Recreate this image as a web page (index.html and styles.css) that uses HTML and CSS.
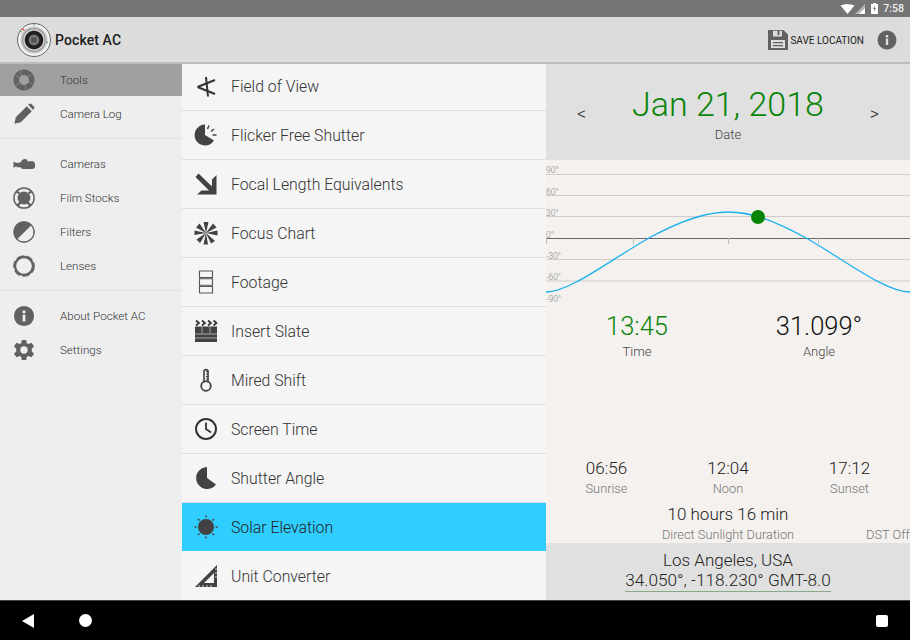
FILE: index.html
```html
<!DOCTYPE html>
<html lang="en">
<head>
<meta charset="utf-8">
<title>Pocket AC</title>
<link rel="stylesheet" href="styles.css">
</head>
<body>
<div class="screen">
  <div class="statusbar">
    <svg class="st-wifi" viewBox="0 0 14 10"><path d="M0 1.500Q7-1.500 14 1.500L7 10Z" fill="#fff"/></svg>
    <svg class="st-cell" viewBox="0 0 10 10"><path d="M10 0V10H0Z" fill="#b5b5b5"/><path d="M10 4V10H4Z" fill="#fff"/></svg>
    <svg class="st-batt" viewBox="0 0 7 11"><path d="M2 0H5V1H7V11H0V1H2Z" fill="#fff"/><path d="M4 2.500L2 6H3.200L3 8.800L5 5H3.800Z" fill="#757575"/></svg>
    <span class="st-time">7:58</span>
  </div>
  <header class="toolbar">
    <svg class="logo" viewBox="0 0 36 36">
      <defs>
        <radialGradient id="lg" cx="50%" cy="50%" r="50%">
          <stop offset="0" stop-color="#777"/><stop offset=".3" stop-color="#8a8a8a"/>
          <stop offset=".42" stop-color="#222"/><stop offset=".62" stop-color="#1c1c1c"/>
          <stop offset=".7" stop-color="#ddd"/><stop offset=".8" stop-color="#999"/><stop offset="1" stop-color="#eee"/>
        </radialGradient>
      </defs>
      <circle cx="18" cy="18" r="16.500" fill="#f2f2f2" stroke="#333" stroke-width=".7"/>
      <circle cx="18" cy="18" r="14" fill="url(#lg)"/>
      <circle cx="18" cy="18" r="3.300" fill="#555"/>
      <path d="M4.500 9L6 10.500" stroke="#2a9a2a" stroke-width="1"/><path d="M6.500 7L8.500 8.500" stroke="#d22" stroke-width="1.200"/><path d="M18 2v1.500" stroke="#2a9a2a"/><path d="M30.500 20l1.500.5" stroke="#2a9a2a"/>
    </svg>
    <span class="app-title">Pocket AC</span>
    <span class="toolbar-gap"></span>
    <svg class="save-icon" viewBox="0 0 20 20"><path fill-rule="evenodd" d="M0 0H15.500L20 4.500V20H0ZM5 0.800V6.500H14V0.800H11.500V5H9.500V0.800ZM3 10V18H17V10Z" fill="#616161"/><path d="M5 12H15V13.200H5ZM5 15H15V16.200H5Z" fill="#616161"/></svg>
    <span class="save-label">SAVE LOCATION</span>
    <svg class="info-icon" viewBox="0 0 20 20"><circle cx="10" cy="10" r="9.500" fill="#616161"/><rect x="8.800" y="8.500" width="2.400" height="6.500" fill="#ddd"/><rect x="8.800" y="5" width="2.400" height="2.400" fill="#ddd"/></svg>
  </header>
  <div class="main">
    <nav class="sidebar">
      <div class="nav-group">
        <div class="nav-item selected">
          <svg class="nav-icon" viewBox="0 0 24 24"><circle cx="12" cy="12" r="8.500" fill="none" stroke="#616161" stroke-width="6"/><path d="M9 1.500L8.500 7.500M21 6L15.500 8.500M22 17L16 13.500M14.500 22.500L13 16.500M3 18L8.500 14.500M2.500 7L8.500 10" stroke="#8c8c8c" stroke-width=".9"/></svg>
          <span>Tools</span>
        </div>
        <div class="nav-item">
          <svg class="nav-icon" viewBox="0 0 24 24"><path d="M1.500 22.500L3 15.500L15 3.500L20.500 9L8.500 21ZM16.500 2L18 .8Q19 .2 20 1L23 4Q23.800 5 23 6L22 7.500Z" fill="#616161"/></svg>
          <span>Camera Log</span>
        </div>
      </div>
      <div class="nav-group">
        <div class="nav-item">
          <svg class="nav-icon" viewBox="0 0 24 24"><path d="M.5 9.500L4 11V10.500H7L9.500 9V7.500L12.500 6.500Q15.500 6 16 9H22Q24 10 24 12.500V15.500Q23.500 17.500 21 17.500H10L8 15.500H4V14.500L.5 16Z" fill="#616161"/></svg>
          <span>Cameras</span>
        </div>
        <div class="nav-item">
          <svg class="nav-icon" viewBox="0 0 24 24"><circle cx="12" cy="12" r="11" fill="none" stroke="#616161" stroke-width="1.600"/><circle cx="12" cy="12" r="7" fill="#616161"/><path d="M4 5L7 7M20 5L17 7M5 20L8 17M19 20L16 17" stroke="#616161" stroke-width="2.500"/></svg>
          <span>Film Stocks</span>
        </div>
        <div class="nav-item">
          <svg class="nav-icon" viewBox="0 0 24 24"><circle cx="12" cy="12" r="11.500" fill="#616161"/><path d="M20 4.500A11 11 0 0 1 4.500 20Z" fill="#eee"/><circle cx="12" cy="12" r="11" fill="none" stroke="#616161" stroke-width="1.200"/></svg>
          <span>Filters</span>
        </div>
        <div class="nav-item">
          <svg class="nav-icon" viewBox="0 0 24 24"><circle cx="12" cy="12" r="9.800" fill="none" stroke="#616161" stroke-width="2.500"/><circle cx="12" cy="12" r="11.200" fill="none" stroke="#616161" stroke-width="1.300" stroke-dasharray="8 3"/></svg>
          <span>Lenses</span>
        </div>
      </div>
      <div class="nav-group last">
        <div class="nav-item">
          <svg class="nav-icon" viewBox="0 0 24 24"><circle cx="12" cy="12" r="11" fill="#616161"/><rect x="10.500" y="10.500" width="3" height="7.500" fill="#eee"/><rect x="10.500" y="6" width="3" height="3" fill="#eee"/></svg>
          <span>About Pocket AC</span>
        </div>
        <div class="nav-item">
          <svg class="nav-icon" viewBox="0 0 24 24"><path fill-rule="evenodd" d="M9.500 1H14.500L15 4.500L17 5.500L20 4L23 8L20.500 10.500V13.500L23 16L20 20L17 18.500L15 19.500L14.500 23H9.500L9 19.500L7 18.500L4 20L1 16L3.500 13.500V10.500L1 8L4 4L7 5.500L9 4.500ZM12 8A4 4 0 1 0 12 16A4 4 0 1 0 12 8Z" fill="#616161"/></svg>
          <span>Settings</span>
        </div>
      </div>
    </nav>
    <section class="tools">
      <div class="tool">
        <svg class="tool-icon" viewBox="0 0 24 24"><path d="M3.500 12L21 5M3.500 12L21 19" stroke="#333" stroke-width="2.100" fill="none"/><path d="M12 2L14 21.500" stroke="#333" stroke-width="2"/></svg>
        <span>Field of View</span>
      </div>
      <div class="tool">
        <svg class="tool-icon" viewBox="0 0 24 24"><path d="M11 1.500A10.500 10.500 0 1 0 20 17.500L11 12Z" fill="#424242"/><path d="M15 2.500L13.500 6M20 6L17 8.500M22.500 12H18.500" stroke="#424242" stroke-width="1.500"/></svg>
        <span>Flicker Free Shutter</span>
      </div>
      <div class="tool">
        <svg class="tool-icon" viewBox="0 0 24 24"><path d="M4.500 1.500L18 14.500V7.500L22.500 3V22.500H3L7.500 18.500H15L1.500 5Z" fill="#424242"/></svg>
        <span>Focal Length Equivalents</span>
      </div>
      <div class="tool">
        <svg class="tool-icon" viewBox="0 0 24 24"><path d="M12 12L9.500 1H14.500ZM12 12L19 2.500L22.500 6.500ZM12 12L23.500 9.500V14.500ZM12 12L21 20L17 22.500ZM12 12L14 23.500H9.500ZM12 12L6 22L2.500 18.500ZM12 12L.5 14V9.500ZM12 12L2 6.500L5.500 2.500Z" fill="#424242"/></svg>
        <span>Focus Chart</span>
      </div>
      <div class="tool">
        <svg class="tool-icon" viewBox="0 0 24 24"><path d="M5.500 1H18.500V7.500H5.500ZM5.500 8.800H18.500V15.200H5.500ZM5.500 16.500H18.500V23H5.500Z" fill="none" stroke="#555" stroke-width="1.100"/></svg>
        <span>Footage</span>
      </div>
      <div class="tool">
        <svg class="tool-icon" viewBox="0 0 24 24"><path d="M2 1.500L5 4L2 6.500M8 1.500L11 4L8 6.500M14 1.500L17 4L14 6.500M19.500 1.500L22.500 4L19.500 6.500" stroke="#333" fill="none" stroke-width="1.700"/><path d="M1 7.500H23V23H1Z" fill="#424242"/><path d="M1 15H23M1 19H23M8 8V14.500M16 8V14.500" stroke="#a8a8a8" stroke-width="1"/></svg>
        <span>Insert Slate</span>
      </div>
      <div class="tool">
        <svg class="tool-icon" viewBox="0 0 24 24"><path d="M10 14.500V2.500Q12 .8 14 2.500V14.500" fill="none" stroke="#424242" stroke-width="1.600"/><path d="M12 3.500H14.500M12 6H14.500M12 8.500H14.500M12 11H14.500" stroke="#424242" stroke-width="1"/><circle cx="12" cy="18" r="4.800" fill="none" stroke="#424242" stroke-width="1.800"/></svg>
        <span>Mired Shift</span>
      </div>
      <div class="tool">
        <svg class="tool-icon" viewBox="0 0 24 24"><circle cx="12" cy="12" r="10" fill="none" stroke="#333" stroke-width="2"/><path d="M12 5.500V12L17 15.500" fill="none" stroke="#333" stroke-width="1.800"/></svg>
        <span>Screen Time</span>
      </div>
      <div class="tool">
        <svg class="tool-icon" viewBox="0 0 24 24"><path d="M13 1A11 11 0 1 0 22 18.500L13 12Z" fill="#424242"/></svg>
        <span>Shutter Angle</span>
      </div>
      <div class="tool active">
        <svg class="tool-icon" viewBox="0 0 24 24"><circle cx="12" cy="12" r="8" fill="#424242"/><path d="M12 .5V2.500M12 21.500V23.500M.5 12H2.500M21.500 12H23.500M4 4L5.500 5.500M18.500 18.500L20 20M4 20L5.500 18.500M18.500 5.500L20 4" stroke="#424242" stroke-width="1.500"/></svg>
        <span>Solar Elevation</span>
      </div>
      <div class="tool">
        <svg class="tool-icon" viewBox="0 0 24 24"><path fill-rule="evenodd" d="M23 1V23H1ZM20 9V19H10Z" fill="#424242"/><path d="M5 23V21M9 23V21M13 23V21M17 23V21M21 5H23M21 9H23M21 13H23" stroke="#f5f5f5" stroke-width=".8"/></svg>
        <span>Unit Converter</span>
      </div>
    </section>
    <section class="solar">
      <div class="date-bar">
        <span class="arrow">&lt;</span>
        <div class="date-block">
          <div class="date-value">Jan 21, 2018</div>
          <div class="date-label">Date</div>
        </div>
        <span class="arrow">&gt;</span>
      </div>
      <div class="solar-body">
        <svg class="chart" viewBox="0 0 364 145" width="364" height="145">
          <g class="grid">
            <line x1="0" x2="364" y1="14.500" y2="14.500"/>
            <line x1="0" x2="364" y1="35.500" y2="35.500"/>
            <line x1="0" x2="364" y1="56.500" y2="56.500"/>
            <line x1="0" x2="364" y1="99.500" y2="99.500"/>
            <line x1="0" x2="364" y1="121" y2="121"/>
          </g>
          <line class="axis" x1="0" x2="364" y1="78.500" y2="78.500"/>
          <path class="axis-tick" d="M0.500 78V84M87.500 78V84M182.500 78V84M272.500 78V84"/>
          <g class="chart-labels">
            <text x="0" y="13">90°</text>
            <text x="0" y="35">60°</text>
            <text x="0" y="56">30°</text>
            <text x="0" y="78">0°</text>
            <text x="0" y="99">-30°</text>
            <text x="0" y="120">-60°</text>
            <text x="0" y="142">-90°</text>
          </g>
          <path class="curve" d="M0 132C24 132 64 100 103 78C134 61 159 52 182 52C206 52 229 61 260 78C299 100 339 132 364 132"/>
          <circle class="dot" cx="212" cy="57" r="7"/>
        </svg>
        <div class="readings">
          <div class="reading"><div class="big green">13:45</div><div class="small">Time</div></div>
          <div class="reading"><div class="big">31.099°</div><div class="small">Angle</div></div>
        </div>
        <div class="sun-times">
          <div class="sun-time"><div class="mid">06:56</div><div class="tiny">Sunrise</div></div>
          <div class="sun-time"><div class="mid">12:04</div><div class="tiny">Noon</div></div>
          <div class="sun-time"><div class="mid">17:12</div><div class="tiny">Sunset</div></div>
        </div>
        <div class="duration">
          <div class="dur-main"><div class="dur-value">10 hours 16 min</div><div class="tiny">Direct Sunlight Duration</div></div>
          <div class="dst"><div class="tiny">DST Off</div></div>
        </div>
      </div>
      <div class="location">
        <div class="city">Los Angeles, USA</div>
        <div class="coords">34.050°, -118.230° GMT-8.0</div>
      </div>
    </section>
  </div>
  <div class="navbar">
    <svg class="nb-back" viewBox="0 0 12 14"><path d="M12 0V14L0 7Z" fill="#fff"/></svg>
    <span class="nb-home"></span>
    <span class="nb-gap"></span>
    <span class="nb-recent"></span>
  </div>
</div>
</body>
</html>
```
FILE: styles.css
```css
* { box-sizing: border-box; }
html, body { margin: 0; padding: 0; }
body { font-family: Roboto, "Liberation Sans", sans-serif; background: #000; }
.screen { width: 910px; height: 640px; display: flex; flex-direction: column; overflow: hidden; }

.statusbar { height: 17px; background: #757575; display: flex; align-items: center; justify-content: flex-end; padding-right: 6px; color: #fff; flex: none; }
.st-wifi { width: 15px; height: 10px; margin-right: 0; }
.st-cell { width: 10px; height: 10px; margin-right: 6px; }
.st-batt { width: 7px; height: 11px; margin-right: 5px; }
.st-time { font-size: 10.500px; font-weight: 500; line-height: 16px; color: #f0f0f0; }

.toolbar { height: 47px; background: #dcdcdc; border-bottom: 2px solid #bdbdbd; display: flex; align-items: center; padding: 0 13px 0 16px; flex: none; }
.logo { width: 36px; height: 36px; margin-right: 3px; }
.app-title { font-size: 14px; font-weight: 500; color: #212121; letter-spacing: .1px; }
.toolbar-gap { flex: 1; }
.save-icon { width: 20px; height: 20px; margin-right: 2px; }
.save-label { font-size: 10px; color: #212121; font-weight: 400; margin-right: 13px; padding-top: 2px; }
.info-icon { width: 20px; height: 20px; }

.main { flex: 1; display: flex; min-height: 0; }

.sidebar { width: 182px; background: #eeeeee; flex: none; }
.nav-group { border-bottom: 1px solid #e2e2e2; padding-bottom: 7px; margin-bottom: 8px; }
.nav-group.last { border-bottom: 0; }
.nav-item { height: 34px; display: flex; align-items: center; padding-left: 13px; font-size: 11.600px; font-weight: 300; color: #333; }
.nav-item span { margin-left: 25px; }
.nav-item.selected { height: 32px; margin-bottom: 1px; background: #a0a0a0; }
.nav-icon { width: 22px; height: 22px; flex: none; }

.tools { width: 364px; background: #f5f5f5; flex: none; display: flex; flex-direction: column; }
.tool { height: 49px; display: flex; align-items: center; padding-left: 12px; border-bottom: 1px solid #dedede; font-size: 15.800px; font-weight: 300; color: #333; flex: none; }
.tool:first-child { height: 47px; padding-bottom: 1px; }
.tool:last-child { border-bottom: 0; height: 48px; }
.tool span { margin-left: 13px; }
.tool.active { background: #30ceff; color: #222; border-bottom-color: #f5f5f5; }
.tool-icon { width: 24px; height: 24px; flex: none; }

.solar { width: 364px; flex: none; display: flex; flex-direction: column; background: #f4f1ee; }
.date-bar { height: 96px; background: #e0e0e0; display: flex; align-items: center; justify-content: space-between; padding: 0 31px; flex: none; }
.arrow { font-size: 18px; font-weight: 300; color: #333; margin-top: 2px; }
.date-block { text-align: center; padding-top: 4px; }
.date-value { font-size: 34px; font-weight: 300; color: #0a840a; line-height: 40px; }
.date-label { font-size: 13px; font-weight: 300; color: #444; line-height: 21px; }

.solar-body { flex: 1; min-height: 0; overflow: hidden; }
.chart { display: block; }
.grid line { stroke: #cfcccb; stroke-width: 1; }
.axis { stroke: #666; stroke-width: 1; }
.axis-tick { stroke: #bbb; stroke-width: 1; fill: none; }
.chart-labels text { font-size: 8.500px; font-weight: 300; fill: #888; font-family: Roboto, sans-serif; }
.curve { fill: none; stroke: #1ab2ee; stroke-width: 1.300; }
.dot { fill: #068406; }

.readings { display: grid; grid-template-columns: 182px 182px; text-align: center; padding-top: 6px; height: 151px; }
.big { font-size: 25.500px; font-weight: 300; color: #111; line-height: 30px; }
.big.green { color: #0a840a; }
.small { font-size: 13px; font-weight: 300; color: #444; line-height: 22px; }

.sun-times { display: grid; grid-template-columns: 121px 122px 121px; text-align: center; }
.mid { font-size: 17px; font-weight: 300; color: #222; line-height: 24px; }
.tiny { font-size: 12.800px; font-weight: 300; color: #777; line-height: 18px; white-space: nowrap; }
.duration { display: flex; margin-top: 4px; }
.dur-main { width: 364px; text-align: center; flex: none; }
.dur-value { font-size: 17px; font-weight: 300; color: #222; line-height: 24px; }
.dst { margin-left: -44px; padding-top: 24px; }

.location { height: 57px; background: #e0e0e0; flex: none; text-align: center; padding-top: 7px; }
.city { font-size: 17px; font-weight: 300; color: #222; line-height: 20px; }
.coords { display: inline-block; font-size: 17.200px; font-weight: 300; color: #222; line-height: 21px; border-bottom: 1px solid #88a888; }

.navbar { height: 40px; background: #000; border-top: 1px solid #444; display: flex; align-items: center; padding: 0 22px; flex: none; }
.nb-back { width: 12px; height: 14px; }
.nb-home { width: 13px; height: 13px; background: #fff; border-radius: 50%; margin-left: 45px; }
.nb-gap { flex: 1; }
.nb-recent { width: 12px; height: 12px; background: #fff; border-radius: 2px; }
```
